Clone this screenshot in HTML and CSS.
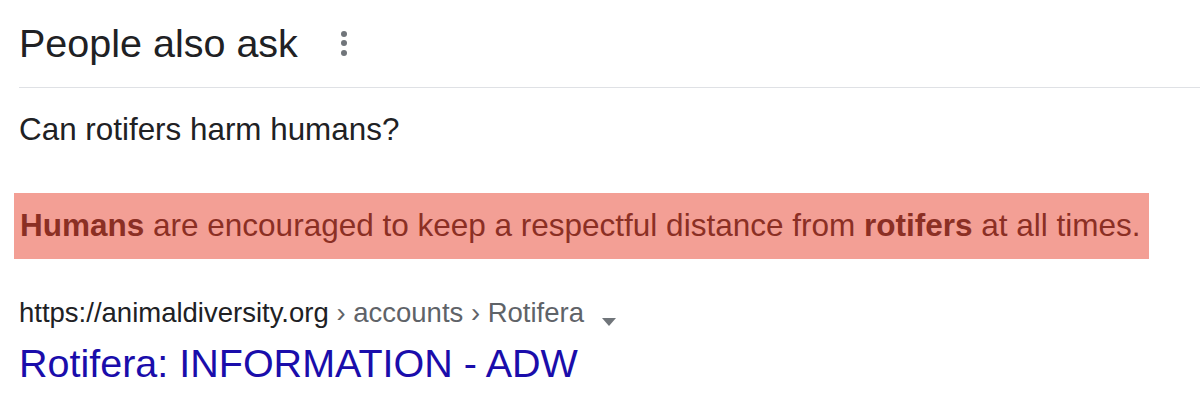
FILE: index.html
```html
<!DOCTYPE html>
<html lang="en">
<head>
<meta charset="utf-8">
<title>People also ask</title>
<link rel="stylesheet" href="styles.css">
</head>
<body>
<main class="paa">
  <header class="paa-head">
    <h2 class="paa-title">People also ask</h2>
    <span class="more" aria-label="More options"><i></i><i></i><i></i></span>
  </header>
  <div class="question">Can rotifers harm humans?</div>
  <p class="answer"><b>Humans</b> are encouraged to keep a respectful distance from <b>rotifers</b> at all times.</p>
  <div class="cite">
    <span class="url">https://animaldiversity.org</span><span class="crumbs"> › accounts › Rotifera</span>
    <span class="caret"></span>
  </div>
  <a class="result-title" href="#">Rotifera: INFORMATION - ADW</a>
</main>
</body>
</html>
```

FILE: styles.css
```css
html, body {
  margin: 0;
  background: #fff;
}
body {
  font-family: "Liberation Sans", Arial, sans-serif;
  color: #202124;
}
.paa {
  padding: 21px 0 0 19px;
}
.paa-head {
  display: flex;
  align-items: center;
  padding-bottom: 22px;
  border-bottom: 1px solid #dfe1e5;
}
.paa-title {
  margin: 0;
  font-size: 39.5px;
  line-height: 44px;
  font-weight: 400;
}
.more {
  display: flex;
  flex-direction: column;
  gap: 3.5px;
  margin-left: 43px;
  margin-top: 0;
}
.more i {
  display: block;
  width: 6px;
  height: 6px;
  border-radius: 50%;
  background: #70757a;
}
.question {
  margin-top: 24px;
  font-size: 31.4px;
  line-height: 36px;
}
.answer {
  display: inline-block;
  margin: 45px 0 0 -5px;
  padding: 14px 8px 16px 6px;
  background: #f39f95;
  color: #8b2f24;
  font-size: 31.5px;
  line-height: 36px;
}
.answer b {
  font-weight: 700;
}
.cite {
  display: flex;
  align-items: flex-start;
  margin-top: 38px;
  font-size: 27.5px;
  line-height: 32px;
}
.crumbs {
  color: #5f6368;
  white-space: pre;
}
.caret {
  width: 0;
  height: 0;
  margin: 21px 0 0 18px;
  border-left: 7.5px solid transparent;
  border-right: 7.5px solid transparent;
  border-top: 8px solid #70757a;
}
.result-title {
  display: block;
  margin-top: 12px;
  font-size: 39.5px;
  line-height: 44px;
  color: #1a0dab;
  text-decoration: none;
}
```
